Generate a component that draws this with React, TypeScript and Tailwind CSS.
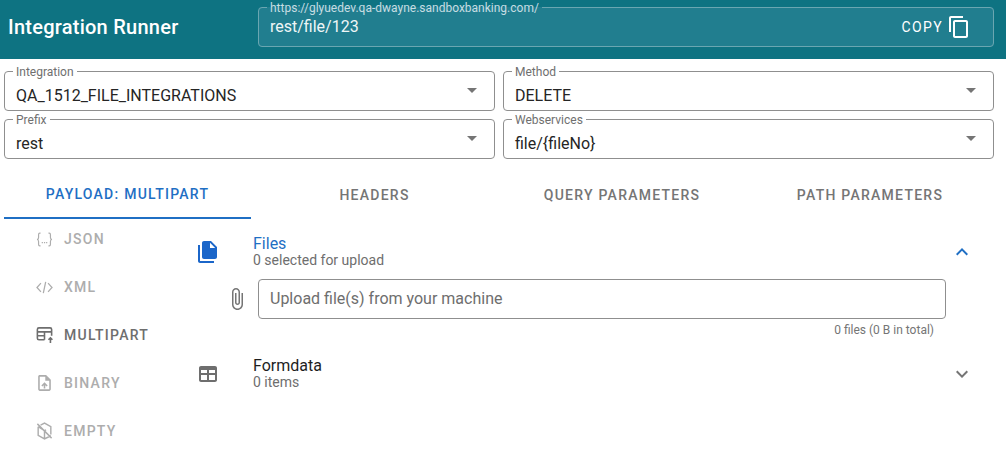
import type { ReactNode } from "react";

const COPY = "M16 1H4c-1.1 0-2 .9-2 2v14h2V3h12V1zm3 4H8c-1.1 0-2 .9-2 2v14c0 1.1.9 2 2 2h11c1.1 0 2-.9 2-2V7c0-1.1-.9-2-2-2zm0 16H8V7h11v14z";
const FILE_PAGES = "M4 5H2v16c0 1.100.9 2 2 2h14v-2H4V5zM15 1H8c-1.100 0-2 .9-2 2v14c0 1.100.9 2 2 2h11c1.100 0 2-.9 2-2V7l-6-6zm-1 7V2.800L19.200 8H14z";
const ATTACH = "M16.5 6v11.5c0 2.21-1.79 4-4 4s-4-1.79-4-4V5c0-1.38 1.12-2.5 2.5-2.5s2.5 1.12 2.5 2.5v10.5c0 .55-.45 1-1 1s-1-.45-1-1V6H10v9.5c0 1.38 1.12 2.5 2.5 2.5s2.5-1.12 2.5-2.5V5c0-2.21-1.79-4-4-4S7 2.79 7 5v12.5c0 3.04 2.46 5.5 5.5 5.5s5.5-2.46 5.5-5.5V6h-1.5z";
const LESS = "M12 8l-6 6 1.41 1.41L12 10.83l4.59 4.58L18 14z";
const MORE = "M16.59 8.59L12 13.17 7.41 8.59 6 10l6 6 6-6z";
const UPLOAD_FILE = "M14 2H6c-1.1 0-2 .9-2 2v16c0 1.1.9 2 2 2h12c1.1 0 2-.9 2-2V8l-6-6zm4 18H6V4h7v5h5v11zM8 15.01l1.41 1.41L11 14.84V19h2v-4.16l1.59 1.59L16 15.01 12.01 11z";
const GRID = "M5 4h14c1.100 0 2 .9 2 2v12c0 1.100-.9 2-2 2H5c-1.100 0-2-.9-2-2V6c0-1.100.9-2 2-2zm0 4v3h6V8H5zm8 0v3h6V8h-6zm-8 5v5h6v-5H5zm8 0v5h6v-5h-6z";

function Icon({ d, className }: { d: string; className: string }) {
  return (
    <svg viewBox="0 0 24 24" fill="currentColor" className={className}>
      <path d={d} fillRule="evenodd" />
    </svg>
  );
}

function SelectField({ label, value }: { label: string; value: string }) {
  return (
    <fieldset className="flex-1 h-[40px] border border-[#8f8f8f] rounded-[4px] pl-[8px] pr-[17px] min-w-0 flex items-start justify-between">
      <legend className="text-[12px] leading-[0px] h-0 text-[#6f6f6f] px-[3px]">{label}</legend>
      <span className="pl-[3px] text-[16px] leading-[24px] mt-[12px] text-[#252525]">{value}</span>
      <svg viewBox="0 0 24 24" fill="#757575" className="w-[24px] h-[24px] -mr-[7px] mt-[6px] shrink-0">
        <path d="M7 10l5 5 5-5z" />
      </svg>
    </fieldset>
  );
}

function SideItem({ icon, label, active }: { icon: ReactNode; label: string; active?: boolean }) {
  return (
    <div className={`h-[48px] flex items-center pl-[35px] gap-[10px] text-[14px] font-medium tracking-[1.25px] ${active ? "text-[#6e6e6e]" : "text-[#adadad]"}`}>
      <span className="w-[19px] flex justify-center">{icon}</span>
      <span>{label}</span>
    </div>
  );
}

export default function App() {
  return (
    <div className="w-[1006px] h-[467px] overflow-hidden bg-white font-['Roboto',sans-serif]">
      {/* Header */}
      <header className="h-[59px] bg-[#0e7382] flex pl-[8px] pr-[12px] pt-[7px] gap-[80px]">
        <div className="w-[170px] text-[20px] font-medium tracking-[.25px] leading-[40px] text-white whitespace-nowrap">Integration Runner</div>
        <fieldset className="flex-1 h-[40px] border border-[#6aa6b1] rounded-[4px] bg-[#217e8f] pl-[8px] pr-[22px] flex items-start justify-between">
          <legend className="text-[12px] leading-[0px] h-0 px-[3px] text-[#c6dde2]">https://glyuedev.qa-dwayne.sandboxbanking.com/</legend>
          <span className="pl-[3px] text-[16px] leading-[24px] mt-[7px] text-[#eef6f7]">rest/file/123</span>
          <div className="flex items-center gap-[4px] text-white mt-[7px]">
            <span className="text-[14px] tracking-[1.4px]">COPY</span>
            <Icon d={COPY} className="w-[24px] h-[24px]" />
          </div>
        </fieldset>
      </header>

      {/* Selects */}
      <div className="flex flex-col gap-[8px] pl-[4px] pr-[12px] pt-[12px]">
        <div className="flex gap-[8px]">
          <SelectField label="Integration" value="QA_1512_FILE_INTEGRATIONS" />
          <SelectField label="Method" value="DELETE" />
        </div>
        <div className="flex gap-[8px]">
          <SelectField label="Prefix" value="rest" />
          <SelectField label="Webservices" value="file/{fileNo}" />
        </div>
      </div>

      {/* Tabs */}
      <div className="flex pl-[4px] pr-[12px] mt-[12px] h-[48px] text-[14px] font-medium tracking-[1.25px] text-[#757575]">
        <div className="w-[247px] flex items-center justify-center text-[#1f6fc4] border-b-2 border-[#1f6fc4]">PAYLOAD: MULTIPART</div>
        <div className="w-[247px] flex items-center justify-center">HEADERS</div>
        <div className="w-[248px] flex items-center justify-center">QUERY PARAMETERS</div>
        <div className="w-[248px] flex items-center justify-center">PATH PARAMETERS</div>
      </div>

      <div className="flex">
        {/* Payload type list */}
        <div className="w-[196px] shrink-0 -mt-[4px]">
          <SideItem
            label="JSON"
            icon={
              <svg viewBox="0 0 24 24" fill="none" stroke="currentColor" strokeWidth="1.5" className="w-[21px] h-[21px]">
                <path d="M7 4H6C4.800 4 4.500 5 4.500 6v3.500C4.500 11 3.500 12 2.500 12c1 0 2 1 2 2.500V18c0 1 .3 2 1.500 2h1M17 4h1c1.200 0 1.500 1 1.500 2v3.500c0 1.500 1 2.500 2 2.500-1 0-2 1-2 2.500V18c0 1-.3 2-1.500 2h-1" />
                <path d="M8.500 16h1.500M11.300 16h1.500M14 16h1.500" />
              </svg>
            }
          />
          <SideItem
            label="XML"
            icon={
              <svg viewBox="0 0 24 24" fill="none" stroke="currentColor" strokeWidth="1.600" className="w-[21px] h-[21px]">
                <path d="M7.500 6.500 2.500 12l5 5.500M16.500 6.500l5 5.500-5 5.500M13.500 5l-3 14" />
              </svg>
            }
          />
          <SideItem
            active
            label="MULTIPART"
            icon={
              <svg viewBox="0 0 24 24" fill="none" stroke="currentColor" strokeWidth="2" className="w-[20px] h-[20px]">
                <path d="M12 18H5a2 2 0 0 1-2-2V5a2 2 0 0 1 2-2h14a2 2 0 0 1 2 2v8M3 8h18M12 8v10M3 13h9M19.500 22v-6M17 18l2.500-2.500L22 18" />
              </svg>
            }
          />
          <SideItem label="BINARY" icon={<Icon d={UPLOAD_FILE} className="w-[20px] h-[20px]" />} />
          <SideItem
            label="EMPTY"
            icon={
              <svg viewBox="0 0 24 24" fill="none" stroke="currentColor" strokeWidth="1.800" className="w-[20px] h-[20px]">
                <path d="M7 4.500 12 2l8 4.500v10M20 18l-8 4-8-4.500v-11M4 6.500l8 5 2-1M12 11.500V22M3 3l18 18" />
              </svg>
            }
          />
        </div>

        {/* Accordion panels */}
        <div className="flex-1 pt-[11px]">
          <div className="flex h-[43px] items-center">
            <Icon d={FILE_PAGES} className="w-[24px] h-[24px] text-[#1b66c9]" />
            <div className="ml-[33px] flex-1">
              <div className="text-[16px] leading-[17px] text-[#1f6fc4]">Files</div>
              <div className="text-[14px] leading-[17px] text-[#6e6e6e]">0 selected for upload</div>
            </div>
            <Icon d={LESS} className="w-[24px] h-[24px] text-[#1f6fc4] mr-[32px]" />
          </div>
          <div className="flex items-center mt-[6px]">
            <Icon d={ATTACH} className="w-[24px] h-[24px] ml-[29px] text-[#757575]" />
            <div className="ml-[9px] w-[688px] h-[40px] border border-[#8f8f8f] rounded-[4px] flex items-center pl-[11px] text-[16px] text-[#6e6e6e]">Upload file(s) from your machine</div>
          </div>
          <div className="w-[738px] text-right text-[12px] leading-[14px] mt-[4px] text-[#757575]">0 files (0 B in total)</div>
          <div className="flex h-[43px] items-center mt-[15px]">
            <Icon d={GRID} className="w-[24px] h-[24px] text-[#6e6e6e]" />
            <div className="ml-[33px] flex-1">
              <div className="text-[16px] leading-[17px] text-[#1e1e1e]">Formdata</div>
              <div className="text-[14px] leading-[17px] text-[#6e6e6e]">0 items</div>
            </div>
            <Icon d={MORE} className="w-[24px] h-[24px] text-[#757575] mr-[32px]" />
          </div>
        </div>
      </div>
    </div>
  );
}
